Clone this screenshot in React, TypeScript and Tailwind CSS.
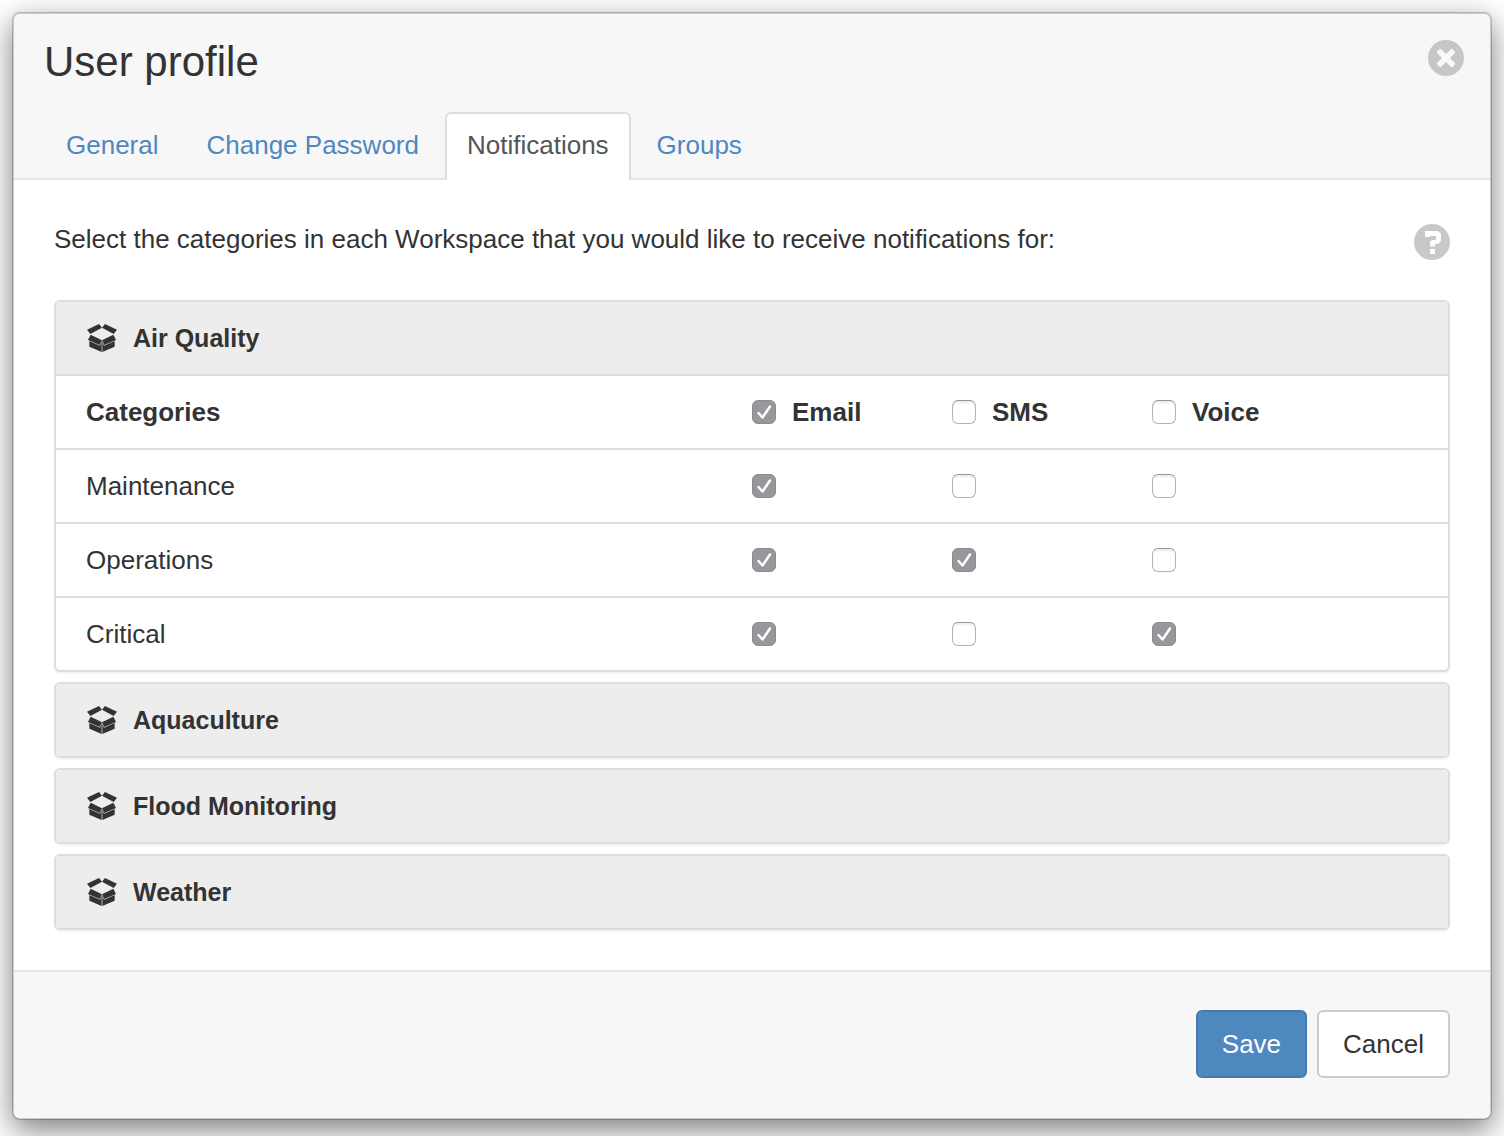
import { useState } from "react";

const channels = ["Email", "SMS", "Voice"];

const initialRows = [
  { name: "Maintenance", values: [true, false, false] },
  { name: "Operations", values: [true, true, false] },
  { name: "Critical", values: [true, false, true] },
];

function BoxIcon() {
  return (
    <svg viewBox="0 0 90 84" className="h-7 w-[30px] shrink-0" fill="#333" aria-hidden="true">
      <path d="M0 17 36 0 45 11 10 30Z" />
      <path d="M90 17 54 0 45 11 80 30Z" />
      <path d="M11 32 45 49 38 63 3 48Z" />
      <path d="M79 32 45 49 52 63 87 48Z" />
      <path d="M7 51 39 65 44 51V84L7 68Z" />
      <path d="M83 51 51 65 46 51V84L83 68Z" />
    </svg>
  );
}

function CloseIcon() {
  return (
    <svg viewBox="0 0 36 36" className="size-9" aria-hidden="true">
      <circle cx="18" cy="18" r="18" fill="#c6c6c6" />
      <path
        d="M11.5 9H13L18 14 23 9H24.5L27 11.5V13L22 18 27 23V24.5L24.5 27H23L18 22 13 27H11.5L9 24.5V23L14 18 9 13V11.5Z"
        fill="#f8f8f8"
      />
    </svg>
  );
}

function HelpIcon() {
  return (
    <svg viewBox="0 0 36 36" className="size-9" aria-hidden="true">
      <circle cx="18" cy="18" r="18" fill="#c8c8c8" />
      <path d="M11 7H24L27 10V17L24 20H21V22.5H16V18L18 16H22V12H16V13H11Z" fill="#fff" />
      <path d="M16 25H21V30H16Z" fill="#fff" />
    </svg>
  );
}

function Check({
  id,
  label,
  checked,
  onChange,
}: {
  id?: string;
  label?: string;
  checked: boolean;
  onChange: () => void;
}) {
  return (
    <span className="relative block size-6 shrink-0">
      <input
        id={id}
        type="checkbox"
        aria-label={label}
        checked={checked}
        onChange={onChange}
        className="block size-6 appearance-none rounded-md border border-[#b4b4b4] border-t-[#969696] bg-white shadow-[inset_0_2px_2px_#ececec] checked:border-[#8c8b90] checked:bg-[#98979c] checked:shadow-none"
      />
      {checked && (
        <svg viewBox="0 0 24 24" className="pointer-events-none absolute inset-0 size-6" fill="none" aria-hidden="true">
          <path d="M6.5 13 10.5 17.5 18 6.5" stroke="#fff" strokeWidth="2.5" strokeLinecap="round" strokeLinejoin="round" />
        </svg>
      )}
    </span>
  );
}

function PanelHeading({ title, open }: { title: string; open?: boolean }) {
  return (
    <h2>
      <button
        type="button"
        aria-expanded={!!open}
        className="flex h-18 w-full items-center gap-4 bg-[#ededed] px-[31px] text-left text-[25px] font-bold"
      >
        <BoxIcon />
        {title}
      </button>
    </h2>
  );
}

const panel = "overflow-hidden rounded-md border-2 border-[#ddd] bg-white shadow-[0_2px_2px_rgba(0,0,0,0.05)]";

export default function App() {
  const [rows, setRows] = useState(initialRows);
  const [all, setAll] = useState([true, false, false]);

  const toggle = (r: number, c: number) =>
    setRows(rows.map((row, i) => (i === r ? { ...row, values: row.values.map((v, j) => (j === c ? !v : v)) } : row)));

  const toggleAll = (c: number) => {
    const next = !all[c];
    setAll(all.map((v, j) => (j === c ? next : v)));
    setRows(rows.map((row) => ({ ...row, values: row.values.map((v, j) => (j === c ? next : v)) })));
  };

  const tab = "block rounded-t-md border-2 border-b-0 px-5 pt-3 pb-4 leading-[38px]";
  const cell = "h-[74px] border-t-2 border-[#ddd] py-0 pr-0";

  return (
    <div className="overflow-hidden bg-white px-3 pt-3 pb-4 font-['Helvetica_Neue','Liberation_Sans',Arial,sans-serif] text-[26px] leading-9 text-[#333]">
      <div
        role="dialog"
        aria-labelledby="dialog-title"
        className="rounded-lg border-2 border-black/20 bg-white bg-clip-padding shadow-[0_10px_30px_rgba(0,0,0,0.5)]"
      >
        <header className="rounded-t-md border-b-2 border-[#e5e5e5] bg-[#f7f7f7] pr-[26px] pl-[30px]">
          <div className="flex h-[98px] items-start justify-between">
            <h1 id="dialog-title" className="pt-5 text-[42px] leading-14">
              User profile
            </h1>
            <button type="button" aria-label="Close" className="pt-[26px]">
              <CloseIcon />
            </button>
          </div>
          <nav className="-mb-0.5 flex gap-1">
            <a href="#general" className={`${tab} border-transparent text-[#4f87bf]`}>
              General
            </a>
            <a href="#password" className={`${tab} border-transparent text-[#4f87bf]`}>
              Change Password
            </a>
            <a href="#notifications" aria-current="page" className={`${tab} border-[#ddd] bg-white text-[#555]`}>
              Notifications
            </a>
            <a href="#groups" className={`${tab} border-transparent text-[#4f87bf]`}>
              Groups
            </a>
          </nav>
        </header>

        <main className="px-10 pt-10 pb-10">
          <div className="mb-10 flex items-start justify-between">
            <p className="leading-[38px]">
              Select the categories in each Workspace that you would like to receive notifications for:
            </p>
            <button type="button" aria-label="Help" className="pt-1">
              <HelpIcon />
            </button>
          </div>

          <div className="flex flex-col gap-2.5">
            <section className={panel}>
              <PanelHeading title="Air Quality" open />
              <table className="w-full table-fixed border-separate border-spacing-0 text-left">
                <colgroup>
                  <col />
                  <col className="w-[200px]" />
                  <col className="w-[200px]" />
                  <col className="w-[296px]" />
                </colgroup>
                <thead>
                  <tr>
                    <th scope="col" className={`${cell} pl-[30px] font-bold`}>
                      Categories
                    </th>
                    {channels.map((name, c) => (
                      <th key={name} scope="col" className={`${cell} pl-0 font-bold`}>
                        <div className="flex items-center gap-4">
                          <Check id={`all-${name}`} checked={all[c]} onChange={() => toggleAll(c)} />
                          <label htmlFor={`all-${name}`}>{name}</label>
                        </div>
                      </th>
                    ))}
                  </tr>
                </thead>
                <tbody>
                  {rows.map((row, r) => (
                    <tr key={row.name}>
                      <td className={`${cell} pl-[30px]`}>{row.name}</td>
                      {row.values.map((value, c) => (
                        <td key={channels[c]} className={`${cell} pl-0`}>
                          <Check label={`${row.name} ${channels[c]}`} checked={value} onChange={() => toggle(r, c)} />
                        </td>
                      ))}
                    </tr>
                  ))}
                </tbody>
              </table>
            </section>
            {["Aquaculture", "Flood Monitoring", "Weather"].map((title) => (
              <section key={title} className={panel}>
                <PanelHeading title={title} />
              </section>
            ))}
          </div>
        </main>

        <footer className="flex justify-end gap-2.5 rounded-b-md border-t-2 border-[#e5e5e5] bg-[#f7f7f7] px-10 pt-[38px] pb-10">
          <button type="button" className="h-17 rounded-md border-2 border-[#457ab0] bg-[#4f87bf] px-6 text-white">
            Save
          </button>
          <button type="button" className="h-17 rounded-md border-2 border-[#ccc] bg-white px-6">
            Cancel
          </button>
        </footer>
      </div>
    </div>
  );
}
